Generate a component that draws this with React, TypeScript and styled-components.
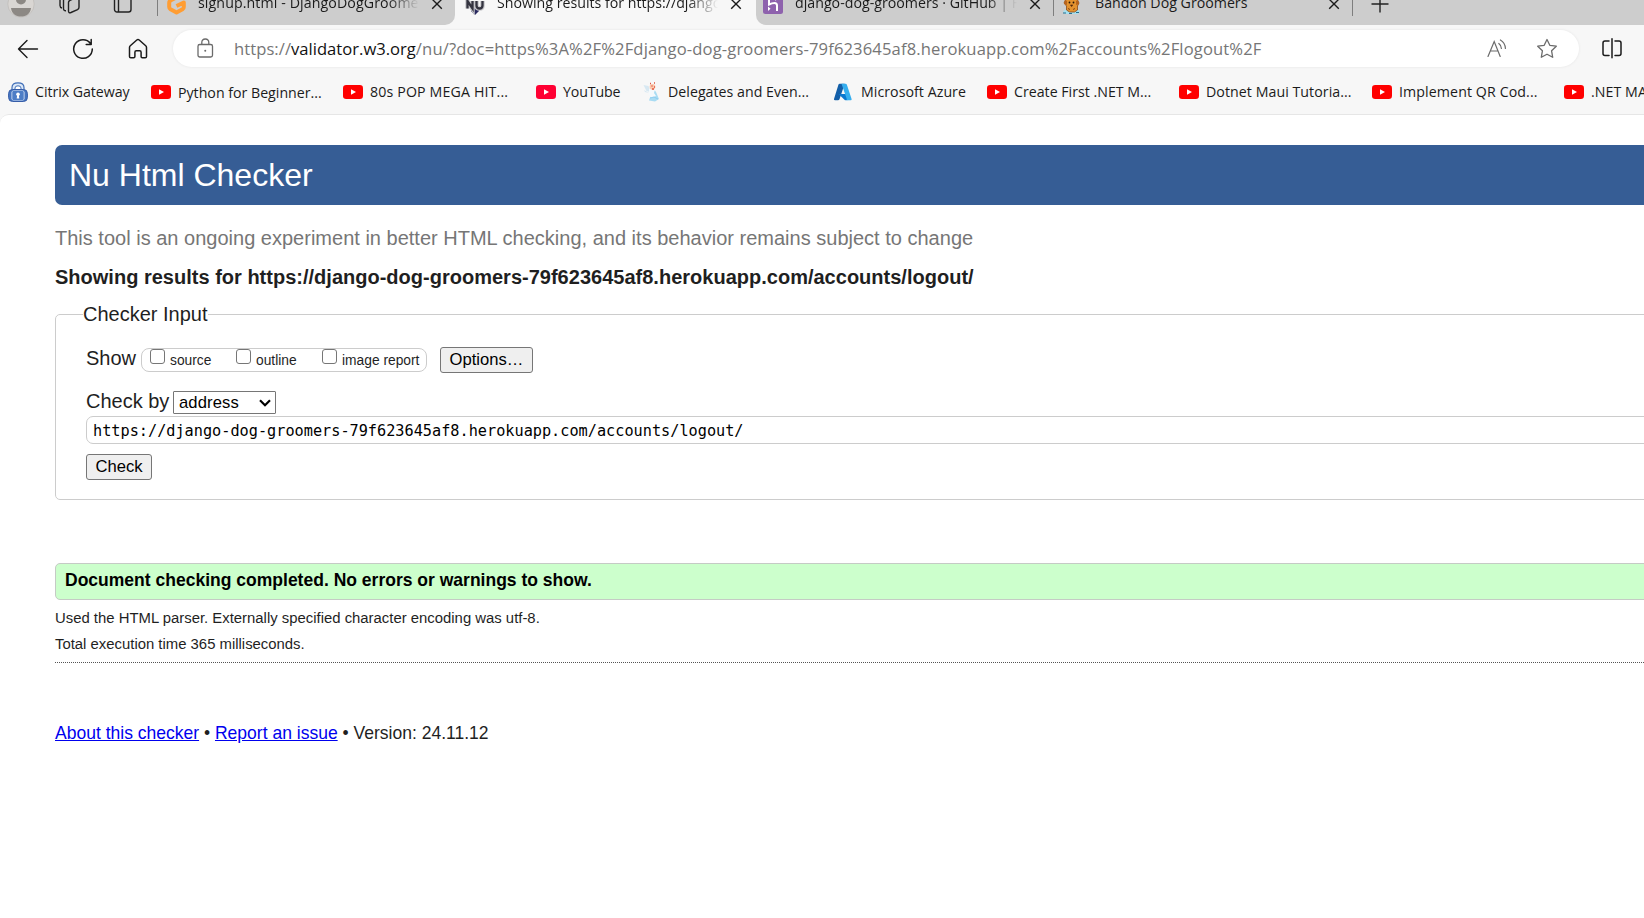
import React from "react";
import styled, { createGlobalStyle } from "styled-components";

const GlobalStyle = createGlobalStyle`
  * { box-sizing: border-box; }
  html, body { margin: 0; height: 100%; overflow: hidden; background: #f7f7f7; }
`;

const Window = styled.div`
  width: 100vw;
  height: 100vh;
  overflow: hidden;
  display: flex;
  flex-direction: column;
  background: #f7f7f7;
  font-family: "Open Sans", sans-serif;
`;

const Label = styled.span<{ $track?: number }>`
  white-space: nowrap;
  letter-spacing: ${(p) => p.$track ?? 0}px;
`;

/* Tab strip */
const TabStrip = styled.div`
  height: 25px;
  flex: none;
  display: flex;
  overflow: hidden;
`;
const InactiveGroup = styled.div<{ $side: "left" | "right" }>`
  display: flex;
  align-items: flex-end;
  background: #cdcdcd;
  height: 25px;
  ${(p) => (p.$side === "left" ? "width: 455px; border-bottom-right-radius: 10px;" : "flex: 1; border-bottom-left-radius: 10px;")}
`;
const ActiveGroup = styled.div`
  display: flex;
  align-items: flex-end;
  height: 25px;
  flex: none;
  width: 301px;
  background: #f7f7f7;
`;
const StripCell = styled.div<{ $w: number }>`
  width: ${(p) => p.$w}px;
  height: 42px;
  flex: none;
  display: flex;
  align-items: center;
  justify-content: center;
`;
const Tab = styled.div<{ $w: number; $pad: number }>`
  width: ${(p) => p.$w}px;
  height: 42px;
  flex: none;
  display: flex;
  align-items: center;
  padding-left: ${(p) => p.$pad}px;
`;
const TabTitle = styled.div<{ $w: number; $fade?: boolean }>`
  width: ${(p) => p.$w}px;
  margin: 0 12px 3px 12px;
  overflow: hidden;
  white-space: nowrap;
  font-size: 14.2px;
  line-height: 24px;
  color: #1b1b1b;
  ${(p) => p.$fade && "mask-image: linear-gradient(90deg, #000 86%, transparent 100%);"}
`;
const Divider = styled.div`
  width: 1px;
  height: 25px;
  margin-bottom: 9px;
  align-self: flex-end;
  background: #7e7e7e;
`;

/* Toolbar */
const Toolbar = styled.div`
  height: 47px;
  flex: none;
  display: flex;
  align-items: center;
`;
const ToolButton = styled.div<{ $w: number }>`
  width: ${(p) => p.$w}px;
  flex: none;
  display: flex;
  justify-content: center;
`;
const AddressBar = styled.div`
  width: 1406px;
  height: 37px;
  flex: none;
  display: flex;
  align-items: center;
  border-radius: 19px;
  background: #fff;
  box-shadow: 0 0 3px rgba(0, 0, 0, 0.08);
  padding-left: 24px;
`;
const Url = styled.div`
  flex: 1;
  padding-left: 20px;
  font-size: 16.6px;
  line-height: 28px;
  color: #767676;
  white-space: nowrap;
`;
const Host = styled(Label)`
  color: #111;
`;
const AddressAction = styled.div<{ $w: number }>`
  width: ${(p) => p.$w}px;
  display: flex;
  justify-content: center;
`;

/* Bookmarks */
const Bookmarks = styled.div`
  height: 42px;
  flex: none;
  display: flex;
  padding: 6px 0 0 8px;
  overflow: hidden;
`;
const Bookmark = styled.div<{ $w: number }>`
  width: ${(p) => p.$w}px;
  height: 28px;
  flex: none;
  display: flex;
  align-items: center;
  gap: 7px;
  font-size: 14.2px;
  line-height: 28px;
  color: #1b1b1b;
`;
const BookmarkLabel = styled(Label)<{ $drop?: boolean }>`
  padding-top: ${(p) => (p.$drop ? 1 : 0)}px;
  margin-top: ${(p) => (p.$drop ? 0 : -1)}px;
`;

/* Validator page */
const Page = styled.main`
  flex: 1;
  border-top: 1px solid #e6e6e6;
  border-top-left-radius: 9px;
  background: #fff;
  padding: 30px 0 0 55px;
  overflow: hidden;
  font-family: "Liberation Sans", Arial, sans-serif;
  font-size: 20px;
  line-height: 24px;
  color: #1f1f1f;
`;
const Banner = styled.h1`
  margin: 0;
  height: 60px;
  padding-left: 14px;
  border-radius: 7px 0 0 7px;
  background: #365d95;
  color: #fff;
  font-size: 32px;
  line-height: 60px;
  font-weight: 400;
`;
const Tagline = styled.p`
  margin: 21px 0 0;
  color: #767676;
  letter-spacing: 0.006px;
`;
const ResultTitle = styled.h2`
  margin: 15px 0 0;
  font-size: 20px;
  line-height: 24px;
  letter-spacing: 0.008px;
`;
const CheckerInput = styled.fieldset`
  margin: 13px -10px 0 0;
  height: 198px;
  border: 1px solid #ccc;
  border-radius: 5px;
  padding: 19px 0 0 30px;
`;
const Legend = styled.legend`
  margin-left: -3px;
  padding: 0;
  height: 25px;
`;
const ShowRow = styled.div`
  display: flex;
  height: 28px;
  align-items: flex-start;
`;
const ShowLabel = styled.div`
  width: 55px;
`;
const OptionGroup = styled.div`
  margin-top: 2px;
  width: 286px;
  height: 24px;
  border: 1px solid #ccc;
  border-radius: 8px;
  display: flex;
  padding-left: 8px;
`;
const Option = styled.label`
  width: 86px;
  flex: none;
  display: flex;
  gap: 5px;
  font-size: 13.8px;
  line-height: 23px;
  white-space: nowrap;
`;
const Checkbox = styled.input`
  appearance: none;
  margin: 0;
  width: 15px;
  height: 15px;
  flex: none;
  border: 1px solid #767676;
  border-radius: 3px;
  background: #fff;
`;
const Button = styled.button<{ $w: number }>`
  width: ${(p) => p.$w}px;
  height: 26px;
  padding: 0;
  border: 1px solid #767676;
  border-radius: 3px;
  background: #efefef;
  color: #000;
  font: 16.6px/24px "Liberation Sans", Arial, sans-serif;
  white-space: nowrap;
  display: flex;
  justify-content: center;
`;
const OptionsSlot = styled.div`
  margin: 1px 0 0 13px;
`;
const MethodRow = styled.div`
  display: flex;
  margin-top: 15px;
  height: 27px;
`;
const MethodLabel = styled.div`
  width: 87px;
`;
const MethodSelect = styled.div`
  margin-top: 2px;
  width: 103px;
  height: 23px;
  border: 1px solid #767676;
  border-radius: 1px;
  display: flex;
  align-items: center;
  justify-content: space-between;
  padding: 0 4px 0 5px;
  color: #000;
  font-size: 16.6px;
  line-height: 21px;
`;
const UrlField = styled.div`
  height: 28px;
  border: 1px solid #ccc;
  border-radius: 7px;
  padding-left: 6px;
  color: #000;
  font: 15.22px/29px "DejaVu Sans Mono", monospace;
  margin-bottom: 10px;
`;
const Success = styled.div`
  margin: 63px -10px 0 0;
  height: 37px;
  border: 1px solid #c5cbc5;
  border-radius: 5px;
  background: #ccffcc;
  padding-left: 9px;
  color: #000;
  font-size: 17.52px;
  line-height: 32px;
  font-weight: 700;
`;
const Details = styled.div`
  padding: 8px 0 8px;
  font-size: 14.89px;
  border-bottom: 1px dotted #555;
`;
const DetailLine = styled.p`
  margin: 0;
  height: 26px;
  line-height: 20px;
  &:last-child { height: 20px; }
`;
const Footer = styled.footer`
  margin-top: 58px;
  font-size: 17.53px;
  white-space: nowrap;
`;
const Link = styled.a`
  color: #0000ee;
  text-decoration: underline;
`;

const CloseIcon = () => (
  <svg width="12" height="12" viewBox="0 0 12 12" stroke="#1b1b1b" strokeWidth="1.4" fill="none">
    <path d="M1.2 1.2l9.6 9.6M10.8 1.2l-9.6 9.6" />
  </svg>
);
const ProfileIcon = () => (
  <svg width="28" height="28" viewBox="0 0 28 28">
    <circle cx="14" cy="14" r="13.2" fill="#d9d6d3" stroke="#bdbab7" strokeWidth=".7" />
    <circle cx="14" cy="9.5" r="5" fill="#8c8884" />
    <path d="M4 18h20c-.5 6-5 8.600-10 8.600S4.500 24 4 18z" fill="#8c8884" />
  </svg>
);
const WorkspacesIcon = () => (
  <svg width="24" height="24" viewBox="0 0 24 24" fill="none" stroke="#222" strokeWidth="1.400">
    <path d="M10.500 10.500q0-1.500 1.500-2.200l7-3q2-.7 2 1.500v8.500q0 1.500-1.500 2.300l-6.500 2.900q-2.500 1-2.500-1.400z" />
    <path d="M8 18.800q-2.500.2-2.500-2.300V5M4 16q-2-.4-2-2.500V5" />
  </svg>
);
const VerticalTabsIcon = () => (
  <svg width="20" height="20" viewBox="0 0 20 20" fill="none" stroke="#222" strokeWidth="1.400">
    <rect x="1.500" y="1.500" width="16.500" height="16.500" rx="2.500" />
    <path d="M5.500 5V18M1.500 5H18" />
  </svg>
);
const GitpodIcon = () => (
  <svg width="19" height="22" viewBox="0 0 19 22" fill="none" stroke="#ff9d33" strokeWidth="4" strokeLinejoin="round">
    <path d="M12 3L4 7.200Q2.200 8 2.200 10v4q0 1.500 1.300 2.300L9.500 19.500l6-3.200q1.300-.8 1.300-2.300V9.500L9.500 13" />
  </svg>
);
const NuIcon = () => (
  <svg width="20" height="22" viewBox="0 0 20 22">
    <path d="M5 14h10l-1.500 4.500-3.500 3.500-3.500-3.500z" fill="#28285e" />
    <path d="M2.500 15.500V8l5 7.500V8M11.500 8v4.500q0 3 3 3t3-3V8" fill="none" stroke="#c7c7cb" strokeWidth="4.500" />
    <path d="M2.500 15.500V8l5 7.500V8M11.500 8v4.500q0 3 3 3t3-3V8" fill="none" stroke="#33333f" strokeWidth="2.300" />
  </svg>
);
const HerokuIcon = () => (
  <svg width="20" height="22" viewBox="0 0 20 22">
    <rect width="20" height="21" rx="2.500" fill="#8e62ad" />
    <path d="M6 3v8.500q3-1.500 5.500-1.500 2.500 0 2.500 2.500V18M14 3q-.2 2-2 4" fill="none" stroke="#fff" strokeWidth="2" />
    <path d="M5 13.500l2.500 2.300L5 18z" fill="#fff" />
  </svg>
);
const DogIcon = () => (
  <svg width="21" height="22" viewBox="0 0 21 22">
    <path d="M1 18.500q3-3 8-2 6-2 9 2l-2 2.500H3z" fill="#a6e0ee" />
    <path d="M3.500 7l4-4h4l4 4 1.500 3-1.500 3v4l-3 2h-5l-3-2v-4L2 10z" fill="#e3922f" stroke="#8b4b19" strokeWidth=".8" />
    <path d="M3 7l2 1v4l-3-1zM16 7l-2 1v4l3-1z" fill="#b8641d" />
    <circle cx="7.500" cy="9.500" r=".9" fill="#241407" />
    <circle cx="11.500" cy="9.500" r=".9" fill="#241407" />
    <path d="M8.500 12h2.200l-1.100 1.600zM6 15.500l2 1M13 15.500l-2 1" fill="#241407" stroke="#6b3510" strokeWidth=".8" />
    <path d="M1 20h3M7 20.500h3M14 19.500h3" stroke="#276f91" strokeWidth="1" />
  </svg>
);
const PlusIcon = () => (
  <svg width="18" height="18" viewBox="0 0 18 18" stroke="#222" strokeWidth="1.400">
    <path d="M9 .5v17M.5 9h17" />
  </svg>
);
const BackIcon = () => (
  <svg width="22" height="20" viewBox="0 0 22 20" fill="none" stroke="#1b1b1b" strokeWidth="1.400" strokeLinecap="round" strokeLinejoin="round">
    <path d="M20.500 10H1.500M10 1.500L1.500 10l8.500 8.500" />
  </svg>
);
const ReloadIcon = () => (
  <svg width="22" height="22" viewBox="0 0 22 22" fill="none" stroke="#1b1b1b" strokeWidth="1.500" strokeLinecap="round" strokeLinejoin="round">
    <path d="M18.500 5.500A9.300 9.300 0 1 0 20.300 11M19.200 1.500v5h-5" />
  </svg>
);
const HomeIcon = () => (
  <svg width="20" height="22" viewBox="0 0 20 22" fill="none" stroke="#1b1b1b" strokeWidth="1.500" strokeLinejoin="round">
    <path d="M1.500 9.500Q1.500 8.500 2.300 7.800L8.800 2q1.200-1 2.400 0l6.500 5.800q.8.700.8 1.700v9q0 1.300-1.300 1.300h-2.900q-1.200 0-1.200-1.200v-4.400q0-1.400-1.400-1.400H8.300q-1.400 0-1.400 1.400v4.400q0 1.200-1.200 1.200H2.800q-1.300 0-1.300-1.300z" />
  </svg>
);
const LockIcon = () => (
  <svg width="17" height="21" viewBox="0 0 17 21" fill="none" stroke="#6b6b6b" strokeWidth="1.300">
    <rect x="1" y="6.500" width="14.500" height="12.500" rx="1.800" />
    <path d="M4.800 6.500V4.500q0-3.500 3.500-3.500t3.500 3.500v2" />
    <circle cx="8.250" cy="12.800" r="1" fill="#6b6b6b" stroke="none" />
  </svg>
);
const ReadAloudIcon = () => (
  <svg width="20" height="19" viewBox="0 0 20 19" fill="none" stroke="#6b6b6b" strokeWidth="1.200" strokeLinecap="round">
    <path d="M1 17.500L7.200 2.500l6 15M3.300 12h7.800M11.800 4.500q2.500 1.800 2.600 5M13.400 1q4.800 2.800 5 8.500" />
  </svg>
);
const StarIcon = () => (
  <svg width="22" height="21" viewBox="0 0 22 21" fill="none" stroke="#6b6b6b" strokeWidth="1.300" strokeLinejoin="round">
    <path d="M11 1.500l2.800 5.800 6.500.9-4.700 4.600 1.100 6.500L11 16.200l-5.700 3.100 1.100-6.500L1.700 8.200l6.500-.9z" />
  </svg>
);
const SplitIcon = () => (
  <svg width="20" height="21" viewBox="0 0 20 21" fill="none" stroke="#1b1b1b" strokeWidth="1.500" strokeLinecap="round">
    <path d="M7 3H3Q1 3 1 5v10.500q0 2 2 2h4M13 3h4q2 0 2 2v10.500q0 2-2 2h-4M10 .8v19" />
  </svg>
);
const YouTubeIcon = ({ fill = "#ff0000" }: { fill?: string }) => (
  <svg width="20" height="20" viewBox="0 0 20 20">
    <rect y="3" width="20" height="14" rx="3.200" fill={fill} />
    <path d="M8 7.200l5 2.800-5 2.800z" fill="#fff" />
  </svg>
);
const CitrixIcon = () => (
  <svg width="20" height="20" viewBox="0 0 20 20">
    <path d="M4 8V5.500Q4 .8 10 .8t6 4.700V8" fill="#dce8f7" stroke="#3f6eb8" strokeWidth="1.200" />
    <path d="M7 8V6q0-2.200 3-2.200T13 6v2z" fill="#fff" stroke="#3f6eb8" strokeWidth="1" />
    <rect x=".6" y="7.500" width="18.800" height="12" rx="4" fill="#4675c0" stroke="#365da8" />
    <rect x="3.500" y="8.500" width="13" height="10" rx="2" fill="#dbe8f8" />
    <rect x="4.300" y="9.100" width="11.400" height="8.800" rx="1" fill="#4d7dc6" />
    <circle cx="10" cy="12.300" r="1.800" fill="#fff" />
    <path d="M9.300 12.500h1.400l.6 4H8.700z" fill="#fff" />
  </svg>
);
const DelegatesIcon = () => (
  <svg width="18" height="20" viewBox="0 0 18 20">
    <path d="M.5 3l5 1 2 6-4-1zM1 8l5 3-4-1z" fill="#d7e8f2" />
    <path d="M8 9q4-2 5 1l3 7-4 2.500-6-1 1-3z" fill="#a9dcf3" />
    <path d="M6 7h6l-1 4 2 3-5 2-2-3z" fill="#f4f9fc" />
    <circle cx="9.500" cy="4.800" r="2.900" fill="#fbc8ad" />
    <path d="M7 1.500h1M11 1h1M8.500 4h1M11 5h1M9 7h2" stroke="#e0563f" strokeWidth="1.300" />
    <path d="M7 16l4-1 4 2" stroke="#8ccdf0" fill="none" />
  </svg>
);
const AzureIcon = () => (
  <svg width="20" height="20" viewBox="1 0 20 20">
    <path d="M6.700 1.700h5L6.500 17.200q-.4 1.100-1.500 1.100H2q-1.400 0-1-1.400L5.400 2.800q.3-1.100 1.300-1.100z" fill="#135fa8" />
    <path d="M5.500 12h8l2 6-3.500.3z" fill="#0a77cf" />
    <path d="M8.500 1.700h4q1 0 1.400 1.100l4.700 14.100q.4 1.400-1 1.400h-4.500q1-.4.600-1.500z" fill="#35aeee" />
  </svg>
);

interface BookmarkItem {
  width: number;
  icon: React.ReactNode;
  text: string;
  track: number;
  drop?: boolean;
}

const bookmarks: BookmarkItem[] = [
  { width: 143, icon: <CitrixIcon />, text: "Citrix Gateway", track: -0.05 },
  { width: 192, icon: <YouTubeIcon />, text: "Python for Beginner...", track: -0.01, drop: true },
  { width: 193, icon: <YouTubeIcon />, text: "80s POP MEGA HIT...", track: 0.14 },
  { width: 107, icon: <YouTubeIcon fill="#ff0033" />, text: "YouTube", track: -0.14 },
  { width: 191, icon: <DelegatesIcon />, text: "Delegates and Even...", track: 0.02 },
  { width: 153, icon: <AzureIcon />, text: "Microsoft Azure", track: 0.04 },
  { width: 192, icon: <YouTubeIcon />, text: "Create First .NET M...", track: 0 },
  { width: 193, icon: <YouTubeIcon />, text: "Dotnet Maui Tutoria...", track: 0.05 },
  { width: 192, icon: <YouTubeIcon />, text: "Implement QR Cod...", track: 0.1 },
  { width: 192, icon: <YouTubeIcon />, text: ".NET MAUI", track: 0.06 },
];

export default function App() {
  return (
    <Window>
      <GlobalStyle />
      <TabStrip>
        <InactiveGroup $side="left">
          <StripCell $w={42}><ProfileIcon /></StripCell>
          <StripCell $w={56}><WorkspacesIcon /></StripCell>
          <StripCell $w={50}><VerticalTabsIcon /></StripCell>
          <StripCell $w={9} />
          <Divider />
          <Tab $w={297} $pad={9}>
            <GitpodIcon />
            <TabTitle $w={221} $fade><Label $track={0.1}>signup.html - DjangoDogGroome</Label></TabTitle>
            <CloseIcon />
          </Tab>
        </InactiveGroup>
        <ActiveGroup>
          <Tab $w={301} $pad={10}>
            <NuIcon />
            <TabTitle $w={221} $fade><Label>Showing results for https://django</Label></TabTitle>
            <CloseIcon />
          </Tab>
        </ActiveGroup>
        <InactiveGroup $side="right">
          <Tab $w={297} $pad={7}>
            <HerokuIcon />
            <TabTitle $w={222} $fade><Label $track={0.01}>django-dog-groomers · GitHub | H</Label></TabTitle>
            <CloseIcon />
          </Tab>
          <Divider />
          <Tab $w={298} $pad={8}>
            <DogIcon />
            <TabTitle $w={221}><Label>Bandon Dog Groomers</Label></TabTitle>
            <CloseIcon />
          </Tab>
          <Divider />
          <StripCell $w={54}><PlusIcon /></StripCell>
        </InactiveGroup>
      </TabStrip>
      <Toolbar>
        <ToolButton $w={56}><BackIcon /></ToolButton>
        <ToolButton $w={54}><ReloadIcon /></ToolButton>
        <ToolButton $w={56}><HomeIcon /></ToolButton>
        <ToolButton $w={7} />
        <AddressBar>
          <LockIcon />
          <Url>
            <Label $track={0.06}>https://</Label>
            <Host>validator.w3.org</Host>
            <Label $track={0.128}>/nu/?doc=https%3A%2F%2Fdjango-dog-groomers-79f623645af8.herokuapp.com%2Faccounts%2Flogout%2F</Label>
          </Url>
          <AddressAction $w={50}><ReadAloudIcon /></AddressAction>
          <AddressAction $w={50}><StarIcon /></AddressAction>
          <AddressAction $w={7} />
        </AddressBar>
        <ToolButton $w={66}><SplitIcon /></ToolButton>
      </Toolbar>
      <Bookmarks>
        {bookmarks.map((b) => (
          <Bookmark key={b.text} $w={b.width}>
            {b.icon}
            <BookmarkLabel $drop={b.drop} $track={b.track}>{b.text}</BookmarkLabel>
          </Bookmark>
        ))}
      </Bookmarks>
      <Page>
        <Banner>Nu Html Checker</Banner>
        <Tagline>This tool is an ongoing experiment in better HTML checking, and its behavior remains subject to change</Tagline>
        <ResultTitle>Showing results for https://django-dog-groomers-79f623645af8.herokuapp.com/accounts/logout/</ResultTitle>
        <CheckerInput>
          <Legend>Checker Input</Legend>
          <ShowRow>
            <ShowLabel>Show</ShowLabel>
            <OptionGroup>
              <Option><Checkbox type="checkbox" />source</Option>
              <Option><Checkbox type="checkbox" />outline</Option>
              <Option><Checkbox type="checkbox" />image report</Option>
            </OptionGroup>
            <OptionsSlot><Button $w={93}>Options…</Button></OptionsSlot>
          </ShowRow>
          <MethodRow>
            <MethodLabel>Check by</MethodLabel>
            <MethodSelect>
              <Label $track={0.12}>address</Label>
              <svg width="12" height="8" viewBox="0 0 12 8" fill="none" stroke="#000" strokeWidth="2.200"><path d="M1 1.200l5 5 5-5" /></svg>
            </MethodSelect>
          </MethodRow>
          <UrlField>https://django-dog-groomers-79f623645af8.herokuapp.com/accounts/logout/</UrlField>
          <Button $w={66}>Check</Button>
        </CheckerInput>
        <Success>Document checking completed. No errors or warnings to show.</Success>
        <Details>
          <DetailLine>Used the HTML parser. Externally specified character encoding was utf-8.</DetailLine>
          <DetailLine>Total execution time 365 milliseconds.</DetailLine>
        </Details>
        <Footer><Link>About this checker</Link> • <Link>Report an issue</Link> • Version: 24.11.12</Footer>
      </Page>
    </Window>
  );
}
